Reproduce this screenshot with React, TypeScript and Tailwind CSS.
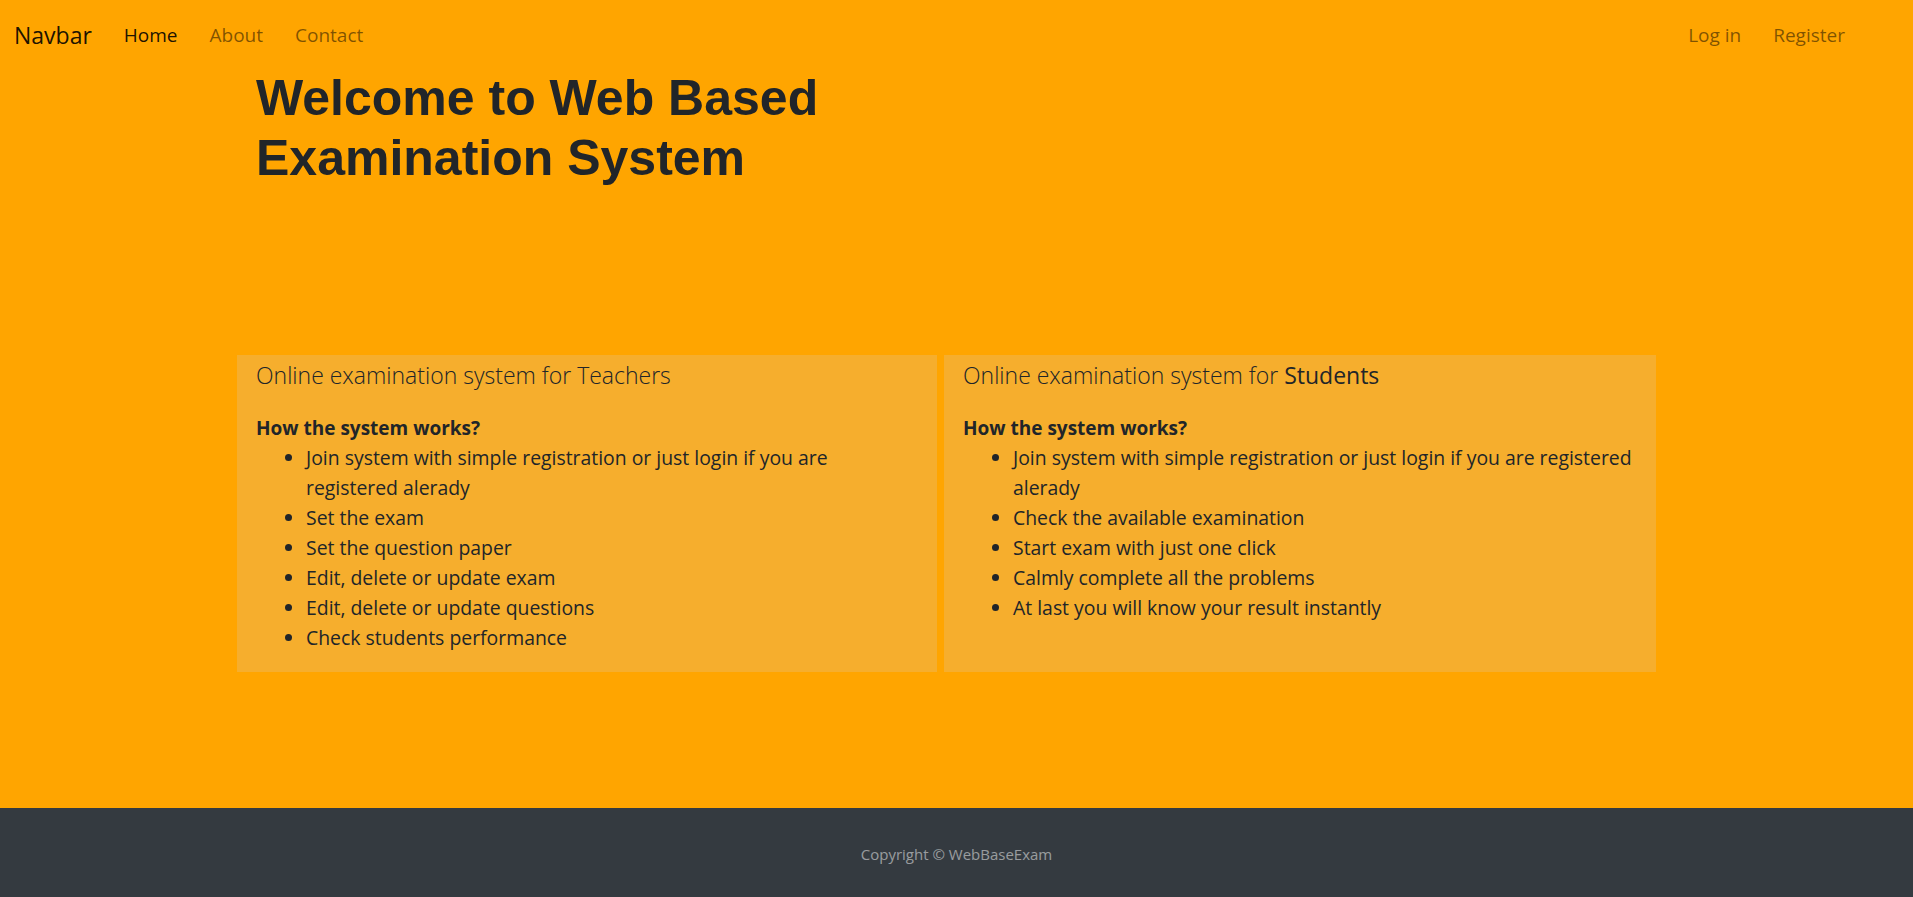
import React from 'react'

const teacherSteps = [
  'Join system with simple registration or just login if you are registered alerady',
  'Set the exam',
  'Set the question paper',
  'Edit, delete or update exam',
  'Edit, delete or update questions',
  'Check students performance',
]

const studentSteps = [
  'Join system with simple registration or just login if you are registered alerady',
  'Check the available examination',
  'Start exam with just one click',
  'Calmly complete all the problems',
  'At last you will know your result instantly',
]

const font = { fontFamily: '"Segoe UI", "Open Sans", "Noto Sans", sans-serif' }

function InfoCard({ who, bold, steps }: { who: string; bold?: boolean; steps: string[] }) {
  return (
    <div className="bg-[#f6ae2d] px-[19px] pt-[5px] pb-[19px] text-[#212529]">
      <h5 className="text-[23px] leading-[30px] font-light mb-[23px]">
        Online examination system for {bold ? <span className="font-normal">{who}</span> : who}
      </h5>
      <p className="text-[19px] leading-[30px] font-bold">How the system works?</p>
      <ul className="list-disc pl-[50px] text-[19.4px] leading-[30px]">
        {steps.map((s) => <li key={s}>{s}</li>)}
      </ul>
    </div>
  )
}

export default function App() {
  return (
    <div className="min-h-screen flex flex-col bg-[#ffa500]" style={font}>
      <nav className="h-[68px] flex items-center pl-[14px] pr-[52px] pt-[2px]">
        <a className="text-[23px] text-black/90 mr-[16px]">Navbar</a>
        <a className="px-4 text-[19px] text-black/90">Home</a>
        <a className="px-4 text-[19px] text-black/50">About</a>
        <a className="px-4 text-[19px] text-black/50">Contact</a>
        <div className="ml-auto flex">
          <a className="px-4 text-[19px] text-black/50">Log in</a>
          <a className="px-4 text-[19px] text-black/50">Register</a>
        </div>
      </nav>
      <main className="flex-1 pl-[237px]">
        <h1 className="max-w-[700px] pl-[19px] text-[50px] leading-[60px] font-bold text-[#212529]" style={{ fontFamily: '"Liberation Sans", Arial, sans-serif' }}>
          Welcome to Web Based Examination System
        </h1>
        <div className="mt-[167px] grid grid-cols-[700px_712px] gap-[7px]">
          <InfoCard who="Teachers" steps={teacherSteps} />
          <InfoCard who="Students" bold steps={studentSteps} />
        </div>
      </main>
      <footer className="h-[89px] bg-[#343a40] flex items-center justify-center pt-[4px]">
        <p className="text-[15px] text-white/50">Copyright © WebBaseExam</p>
      </footer>
    </div>
  )
}
